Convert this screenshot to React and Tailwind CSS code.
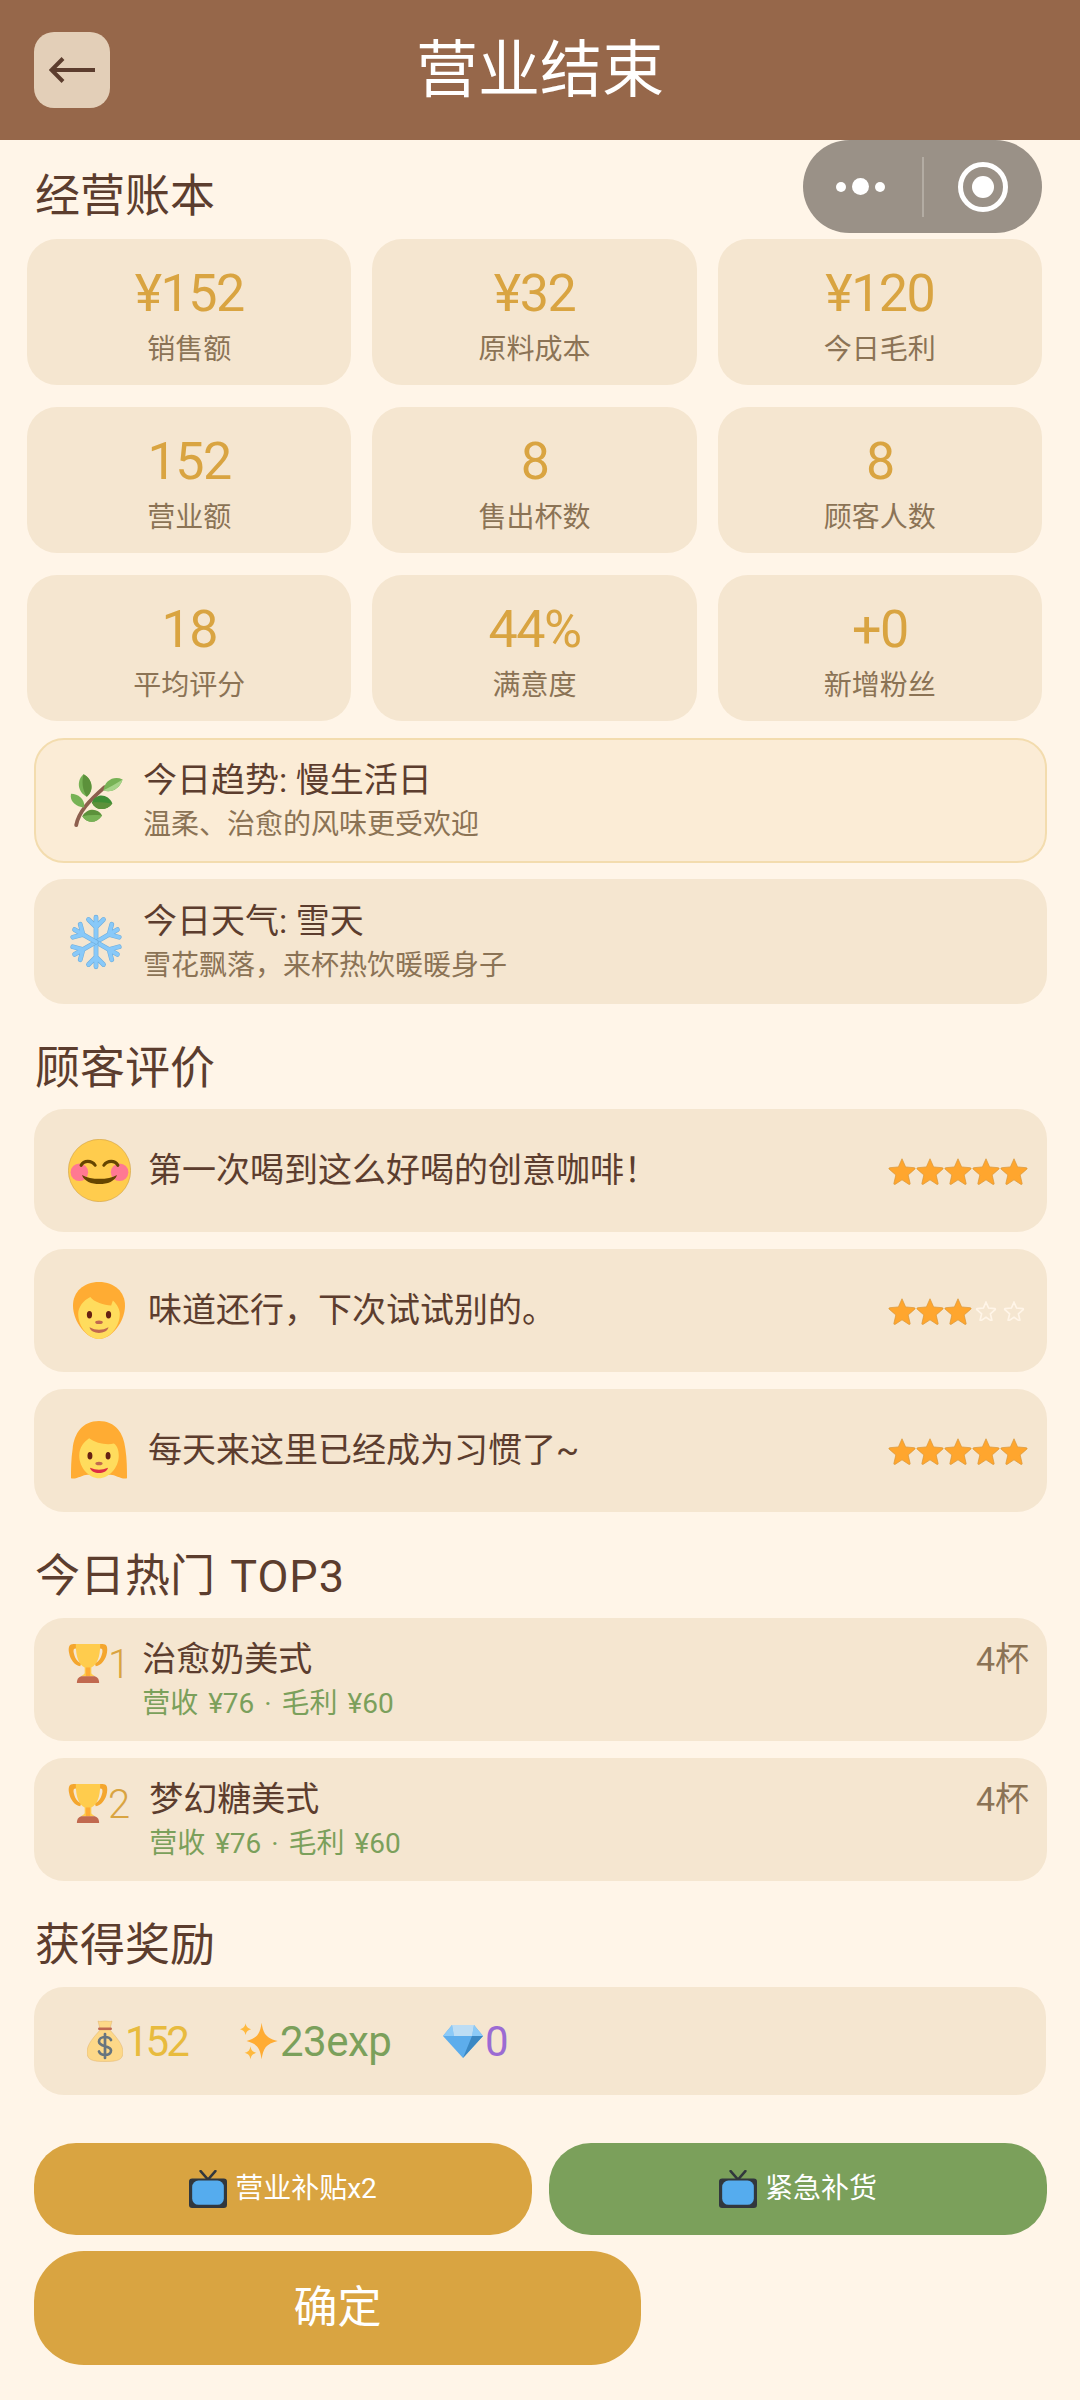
import React from 'react';

const FONT = "font-['Roboto','Noto_Sans_CJK_SC',sans-serif]";

const stats = [
  { value: '¥152', label: '销售额' },
  { value: '¥32', label: '原料成本' },
  { value: '¥120', label: '今日毛利' },
  { value: '152', label: '营业额' },
  { value: '8', label: '售出杯数' },
  { value: '8', label: '顾客人数' },
  { value: '18', label: '平均评分' },
  { value: '44%', label: '满意度' },
  { value: '+0', label: '新增粉丝' },
];

// emoji drawings, the browser has no colour emoji font
function Herb({ className }) {
  return (
    <svg viewBox="28 30 165 172" className={className}>
      <path d="M47 193C55 150 90 115 135 75" fill="none" stroke="#8D5F4E" strokeWidth="12" strokeLinecap="round" />
      <path d="M80 104C50 90 48 52 70 34c28 14 34 52 10 70z" fill="#77B255" />
      <path d="M80 104C66 82 64 58 70 34c28 14 34 52 10 70z" fill="#5C913B" />
      <path d="M132 84c4-30 32-46 60-34-8 28-36 44-60 34z" fill="#77B255" />
      <path d="M132 84c16-8 38-20 60-34-8 28-36 44-60 34z" fill="#A6D388" />
      <path d="M72 138c-30-4-46-22-41-43 24 0 44 18 41 43z" fill="#77B255" />
      <path d="M96 122c14-32 52-26 64 3-18 24-52 24-64-3z" fill="#3E8E35" />
      <path d="M96 122c20-2 42 0 64 3-18 24-52 24-64-3z" fill="#5C913B" />
      <path d="M66 165c18-28 50-24 62-2-18 26-46 26-62 2z" fill="#5C913B" />
      <path d="M66 165c20-4 42-4 62-2-18 26-46 26-62 2z" fill="#77B255" />
    </svg>
  );
}

function Snowflake({ className }) {
  const arm = (
    <g fill="none" strokeLinecap="round">
      <path d="M18 18V1.500M18 8l-5-5M18 8l5-5" stroke="#6FAEDD" strokeWidth="3.200" />
      <path d="M18 18V1.500M18 8l-5-5M18 8l5-5" stroke="#88C9F9" strokeWidth="2.400" />
    </g>
  );
  return (
    <svg viewBox="0 0 36 36" className={className}>
      {[0, 60, 120, 180, 240, 300].map((r) => (
        <g key={r} transform={`rotate(${r} 18 18)`}>{arm}</g>
      ))}
    </svg>
  );
}

function SmileFace({ className }) {
  return (
    <svg viewBox="0 0 36 36" className={className}>
      <circle cx="18" cy="18" r="17.800" fill="#FFCC4D" stroke="#C9973A" strokeWidth="0.300" />
      <circle cx="6.500" cy="19" r="5" fill="#FF7892" />
      <circle cx="29.500" cy="19" r="5" fill="#FF7892" />
      <path d="M7.500 15c1.500-3 6-3 8 0M20.500 15c2-3 6.500-3 8 0" fill="none" stroke="#664500" strokeWidth="1.800" strokeLinecap="round" />
      <path d="M8 20.500c5 3 15 3 20 0-2 7-18 7-20 0z" fill="#664500" />
    </svg>
  );
}

function Child({ className }) {
  return (
    <svg viewBox="3 1 30 34" preserveAspectRatio="none" className={className}>
      <path d="M18 1C9 1 3 7 3 15c0 10 8 20 15 20s15-10 15-20C33 7 27 1 18 1z" fill="#FFAC33" />
      <path d="M6 20c0-4 3-8 7-10 2 3 8 5 12 5l1-3c1 1 4 4 4 8 0 8-6 15-12 15S6 28 6 20z" fill="#FFDC5D" />
      <ellipse cx="12.500" cy="20.500" rx="1.500" ry="2.200" fill="#662113" />
      <ellipse cx="23.500" cy="20.500" rx="1.500" ry="2.200" fill="#662113" />
      <ellipse cx="18" cy="25" rx="2.200" ry="1.100" fill="#C1694F" />
      <path d="M12.500 28c3.500 2 7.500 2 11 0-1 4.500-10 4.500-11 0z" fill="#C1694F" />
    </svg>
  );
}

function Woman({ className }) {
  return (
    <svg viewBox="1 1 34 34" preserveAspectRatio="none" className={className}>
      <path d="M18 1C8 1 3 8 2 17c-1 6-1 12-1 17 3 1 7-2 10-2h14c3 0 7 3 10 2 0-5 0-11-1-17C33 8 28 1 18 1z" fill="#FFAC33" />
      <path d="M6 21c0-5 3-8 6-10 4 3 11 4 15 3 2 1 3 4 3 7 0 7-6 13-12 13S6 28 6 21z" fill="#FFDC5D" />
      <ellipse cx="12.500" cy="21" rx="1.500" ry="2.200" fill="#662113" />
      <ellipse cx="23.500" cy="21" rx="1.500" ry="2.200" fill="#662113" />
      <ellipse cx="18" cy="25.500" rx="2.200" ry="1" fill="#C1694F" />
      <path d="M12.500 28c4 1.500 7 1.500 11 0-1 4-10 4-11 0z" fill="#DD2E44" />
    </svg>
  );
}

function Trophy({ className }) {
  return (
    <svg viewBox="0 0 36 36" className={className}>
      <path d="M5 1h26c4 0 5 3 4 8-1 6-5 11-10 12l-1-3c4-1 6-5 7-10 0-2 0-3-2-3H7C5 5 5 6 5 8c1 5 3 9 7 10l-1 3C6 20 2 15 1 9 0 4 1 1 5 1z" fill="#F4A62E" />
      <path d="M7 1h22c0 12-3 19-8 21v5c0 1 3 3 4 3H11c1 0 4-2 4-3v-5C10 20 7 13 7 1z" fill="#FFCC4D" />
      <path d="M16 22h4v8h-4z" fill="#FFAC33" />
      <path d="M8 36c0-4 2-6 5-6h10c3 0 5 2 5 6z" fill="#C1694F" />
    </svg>
  );
}

function MoneyBag({ className }) {
  return (
    <svg viewBox="0 0 36 42" className={className}>
      <path d="M11 1c2 1 4 0 7 0s5 1 7 0l-2 8H13z" fill="#FDD888" stroke="#D9A860" strokeWidth="0.400" />
      <path d="M13 10C7 17 0 24 0 32c0 8 5 9.500 18 9.500S36 40 36 32c0-8-7-15-13-22z" fill="#FDD888" stroke="#D9A860" strokeWidth="0.400" />
      <rect x="11" y="7.500" width="14" height="2.500" rx="1.200" fill="#BF6952" />
      <path d="M24 20c-1-2.500-3.500-3-6-3-3.500 0-6 1.800-6 4.500 0 6 12 3.500 12 9 0 2.800-2.500 4.500-6 4.500-2.500 0-5-1.200-6-3.500M18 14v24" fill="none" stroke="#67757F" strokeWidth="2.700" strokeLinecap="round" />
    </svg>
  );
}

function Sparkles({ className }) {
  return (
    <svg viewBox="480 36 116 116" className={className}>
      <path d="M546 38c5 34 13 47 49 56-36 9-44 22-49 56-5-34-13-47-46-56 33-9 41-22 46-56z" fill="#FFAC33" />
      <path d="M497 40c2 10 6 15 17 18-11 3-15 8-17 18-2-10-6-15-17-18 11-3 15-8 17-18z" fill="#FFB93D" />
      <path d="M512 110c2 12 6 17 18 20-12 3-16 8-18 20-2-12-6-17-18-20 12-3 16-8 18-20z" fill="#FFB93D" />
    </svg>
  );
}

function Gem({ className }) {
  return (
    <svg viewBox="0 0 40 33" className={className}>
      <path d="M0 11L9 0h22l9 11-20 22z" fill="#5DADEC" />
      <path d="M9 0L0 11h11zM31 0l9 11H29z" fill="#8CCAF7" />
      <path d="M9 0h22l-2 11H11z" fill="#BDDDF4" />
      <path d="M29 11h11L20 33z" fill="#3B88C3" />
    </svg>
  );
}

function Tv({ className }) {
  return (
    <svg viewBox="0 0 36 36" className={className}>
      <path d="M11 1l7 8 7-8" fill="none" stroke="#31373D" strokeWidth="2.400" strokeLinecap="round" />
      <rect x="0" y="8" width="36" height="28" rx="3" fill="#31373D" />
      <rect x="3" y="10" width="30" height="23" rx="6" fill="#55ACEE" />
    </svg>
  );
}

function Star({ filled }) {
  const d = 'M12 1.500l3.100 7 7.500.7c.6.100.8.800.4 1.200l-5.700 5 1.700 7.400c.1.600-.5 1-1 .7L12 19.600l-6 3.900c-.5.300-1.100-.1-1-.7l1.700-7.400-5.700-5c-.4-.4-.2-1.100.4-1.200l7.500-.7z';
  if (filled) {
    return (
      <svg viewBox="0 0 24 24" className="w-[28px] h-[28px]">
        <path d={d} fill="#FFA62E" stroke="#D9963A" strokeWidth="0.600" />
      </svg>
    );
  }
  return (
    <svg viewBox="0 0 24 24" className="w-[28px] h-[20px]">
      <path d={d} fill="none" stroke="#FFF5E8" strokeWidth="2" />
    </svg>
  );
}

function Stars({ count }) {
  return (
    <div className="flex items-center">
      {[1, 2, 3, 4, 5].map((i) => (
        <Star key={i} filled={i <= count} />
      ))}
    </div>
  );
}

function SectionTitle({ children, className }) {
  return <h2 className={`text-[45px] leading-[56px] font-normal text-[#5c3d2e] pl-[35px] pt-[1px] h-[56px] ${className}`}>{children}</h2>;
}

function InfoCard({ icon, title, desc, border }) {
  return (
    <div className={`h-[125px] rounded-[30px] flex items-center ${border ? 'pl-[34px] bg-[#fbecd6] border-2 border-[#f3dcae]' : 'pl-[35px] bg-[#f5e6d0]'}`}>
      {icon}
      <div className="ml-[20px] -mt-[1px]">
        <div className="text-[34px] leading-[46px] text-[#5c3d2e]">{title}</div>
        <div className="text-[28px] leading-[38px] text-[#8b7355] mt-[3px]">{desc}</div>
      </div>
    </div>
  );
}

function Review({ icon, text, stars }) {
  return (
    <div className="h-[123px] rounded-[30px] bg-[#f5e6d0] flex items-center pl-[32px] pr-[19px]">
      <div className="w-[82px] shrink-0">{icon}</div>
      <div className="flex-1 text-[34px] text-[#5c3d2e]">{text}</div>
      <Stars count={stars} />
    </div>
  );
}

function TopItem({ rank, name, pl }) {
  return (
    <div className="h-[123px] rounded-[30px] bg-[#f5e6d0] flex pl-[34px] pr-[18px] pt-[18px]">
      <div className="flex items-start h-[46px] pt-[7px]">
        <Trophy className="w-[40px] h-[40px]" />
        <span className="text-[40px] leading-[46px] text-[#d9a441] font-light -mt-[1px]">{rank}</span>
      </div>
      <div className={`flex-1 ${pl}`}>
        <div className="text-[34px] leading-[46px] text-[#5c3d2e]">{name}</div>
        <div className="text-[28px] leading-[38px] text-[#7ba05b] mt-[3px] [word-spacing:3px]">营收 ¥76 · 毛利 ¥60</div>
      </div>
      <div className="text-[34px] leading-[46px] text-[#8b7355]">4杯</div>
    </div>
  );
}

export default function App() {
  return (
    <div className={`relative w-[1080px] h-[2400px] bg-[#fff5e8] ${FONT}`}>
      {/* header */}
      <header className="h-[140px] bg-[#96674a] flex items-center justify-center relative">
        <button className="absolute left-[34px] top-[32px] w-[76px] h-[76px] rounded-[20px] bg-[#e3cfb8] flex items-center justify-center">
          <svg viewBox="0 0 46 26" className="w-[46px] h-[26px]">
            <path d="M14 1.500L2.500 13 14 24.500M3 13h43" fill="none" stroke="#5c3d2e" strokeWidth="4" />
          </svg>
        </button>
        <h1 className="text-[62px] font-normal text-white">营业结束</h1>
      </header>

      {/* wechat capsule */}
      <div className="absolute left-[803px] top-[140px] w-[239px] h-[93px] rounded-full bg-[#9a9187] flex items-center">
        <div className="w-[119px] pr-[5px] flex items-center justify-center gap-[6px]">
          <span className="w-[10px] h-[10px] rounded-full bg-white" />
          <span className="w-[17px] h-[17px] rounded-full bg-white" />
          <span className="w-[10px] h-[10px] rounded-full bg-white" />
        </div>
        <div className="w-[2px] h-[60px] bg-[#b3aca3]" />
        <div className="flex-1 flex items-center justify-center">
          <div className="w-[50px] h-[50px] rounded-full border-[5px] border-white flex items-center justify-center">
            <span className="w-[22px] h-[22px] rounded-full bg-white" />
          </div>
        </div>
      </div>

      <SectionTitle className="mt-[28px]">经营账本</SectionTitle>

      <div className="grid grid-cols-3 gap-x-[21px] gap-y-[22px] pl-[27px] pr-[38px] mt-[15px]">
        {stats.map((s) => (
          <div key={s.label} className="h-[146px] rounded-[30px] bg-[#f5e6d0] flex flex-col items-center pt-[23px]">
            <div className="text-[52px] leading-[64px] text-[#d9a441] tracking-[-1.500px]">{s.value}</div>
            <div className="text-[28px] leading-[38px] text-[#8b7355] mt-[5px]">{s.label}</div>
          </div>
        ))}
      </div>

      <div className="pl-[34px] pr-[33px] mt-[17px] flex flex-col gap-[16px]">
        <InfoCard border icon={<Herb className="w-[53px] h-[55px]" />} title="今日趋势: 慢生活日" desc="温柔、治愈的风味更受欢迎" />
        <InfoCard icon={<Snowflake className="w-[54px] h-[56px]" />} title="今日天气: 雪天" desc="雪花飘落，来杯热饮暖暖身子" />
      </div>

      <SectionTitle className="mt-[36px]">顾客评价</SectionTitle>

      <div className="pl-[34px] pr-[33px] mt-[13px] flex flex-col gap-[17px]">
        <Review icon={<SmileFace className="w-[63px] h-[63px] ml-[2px]" />} text="第一次喝到这么好喝的创意咖啡！" stars={5} />
        <Review icon={<Child className="w-[52px] h-[57px] ml-[7px]" />} text="味道还行，下次试试别的。" stars={3} />
        <Review icon={<Woman className="w-[56px] h-[59px] ml-[5px]" />} text="每天来这里已经成为习惯了~" stars={5} />
      </div>

      <SectionTitle className="mt-[36px]">今日热门 <span className="tracking-[1px] ml-[4px]">TOP3</span></SectionTitle>

      <div className="pl-[34px] pr-[33px] mt-[14px] flex flex-col gap-[17px]">
        <TopItem rank="1" name="治愈奶美式" pl="pl-[12px]" />
        <TopItem rank="2" name="梦幻糖美式" pl="pl-[19px]" />
      </div>

      <SectionTitle className="mt-[36px]">获得奖励</SectionTitle>

      <div className="mx-[34px] mt-[14px] h-[108px] rounded-[30px] bg-[#f5e6d0] flex items-center pl-[53px] text-[42px]">
        <MoneyBag className="w-[36px] h-[42px]" />
        <span className="text-[#e8bb3e] ml-[2px] w-[64px] tracking-[-3px]">152</span>
        <Sparkles className="w-[38px] h-[38px] ml-[51px]" />
        <span className="text-[#7ba05b] ml-[2px] w-[112px] tracking-[-0.500px]">23exp</span>
        <Gem className="w-[40px] h-[33px] ml-[51px]" />
        <span className="text-[#9b6bd3] ml-[2px]">0</span>
      </div>

      <div className="pl-[34px] pr-[33px] mt-[48px] flex gap-[17px]">
        <button className="flex-1 h-[92px] rounded-[42px] bg-[#d9a441] flex items-center justify-center gap-[8px] text-[28px] text-white">
          <Tv className="w-[38px] h-[38px]" />
          营业补贴x2
        </button>
        <button className="flex-1 h-[92px] rounded-[42px] bg-[#7ba05b] flex items-center justify-center gap-[8px] text-[28px] text-white">
          <Tv className="w-[38px] h-[38px]" />
          紧急补货
        </button>
      </div>

      <div className="pl-[34px] mt-[16px]">
        <button className="w-[607px] h-[114px] rounded-[50px] bg-[#d9a441] text-[44px] text-white">确定</button>
      </div>
    </div>
  );
}
